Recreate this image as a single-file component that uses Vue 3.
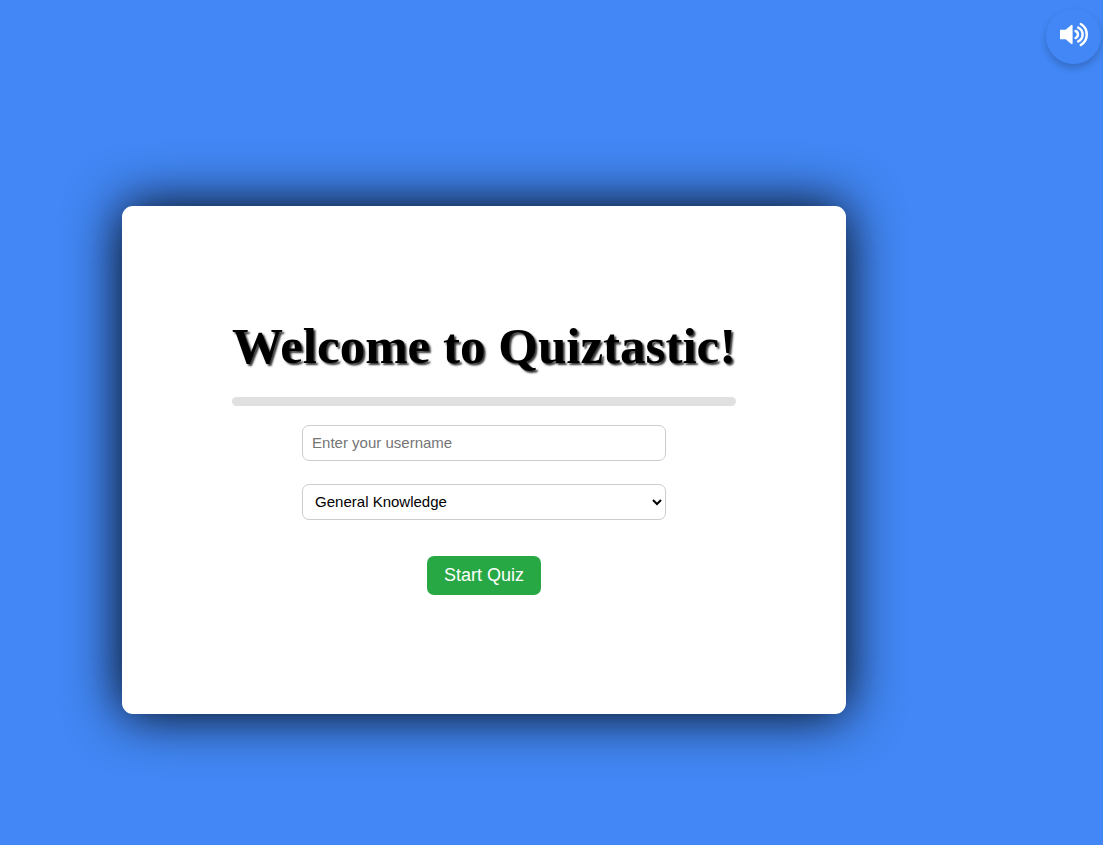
<script setup>
import { ref } from 'vue'

const username = ref('')
const category = ref('General Knowledge')
const categories = ['General Knowledge', 'Science', 'History', 'Sports']
</script>

<template>
  <div class="page">
    <button class="sound" type="button" aria-label="Toggle sound">
      <svg viewBox="0 0 30 27" width="30" height="27" aria-hidden="true">
        <path fill="currentColor" d="M1 8.7H6.6L12 4.2Q13.6 3.2 13.6 4.8V22.2Q13.6 23.8 12 22.8L6.6 18.3H1Z" />
        <g fill="none" stroke="currentColor" stroke-width="2.5" stroke-linecap="round">
          <path d="M16.6 10A3.8 3.8 0 0 1 16.6 17" />
          <path d="M19.2 6.6A7.6 7.6 0 0 1 19.2 20.4" />
          <path d="M21.8 3A12.2 12.2 0 0 1 21.8 24" />
        </g>
      </svg>
    </button>

    <main class="card">
      <div class="intro">
        <h1>Welcome to Quiztastic!</h1>
        <div class="progress"></div>
        <form @submit.prevent>
          <input
            v-model="username"
            class="field"
            type="text"
            placeholder="Enter your username"
            aria-label="Username"
          />
          <select v-model="category" class="field" aria-label="Category">
            <option v-for="c in categories" :key="c">{{ c }}</option>
          </select>
          <button class="start" type="submit">Start Quiz</button>
        </form>
      </div>
    </main>
  </div>
</template>

<style>
body {
  background: #4287f5;
}
</style>

<style scoped>
.page {
  box-sizing: border-box;
  display: flex;
  align-items: center;
  min-height: 100vh;
  padding: 75px 16px 0 122px;
  font-family: "Liberation Sans", Arial, sans-serif;
}

.sound {
  position: absolute;
  top: 9px;
  right: 2px;
  display: flex;
  align-items: center;
  justify-content: center;
  width: 55px;
  height: 55px;
  padding: 0 0 4px 1px;
  border: 0;
  border-radius: 50%;
  background: #4287f5;
  color: #fff;
  box-shadow: 0 4px 7px rgba(0, 0, 0, 0.2);
  cursor: pointer;
}

.card {
  padding: 110px;
  border-radius: 11px;
  background: #fff;
  box-shadow: 0 0 54px #000;
}

h1 {
  margin: 0 0 20px;
  font-family: "Liberation Serif", "Times New Roman", serif;
  font-size: 51px;
  line-height: 61px;
  font-weight: 700;
  color: #000;
  text-align: center;
  text-shadow: 2px 2px 2px rgba(0, 0, 0, 0.8);
}

.progress {
  height: 9px;
  border-radius: 5px;
  background: #e0e0e0;
}

form {
  display: flex;
  flex-direction: column;
  align-items: center;
  margin-top: 19px;
}

.field {
  box-sizing: border-box;
  width: 364px;
  max-width: 100%;
  height: 36px;
  margin: 0 0 23px;
  padding: 0 9px 2px;
  border: 1px solid #ccc;
  border-radius: 7px;
  background: #fff;
  color: #000;
  font: 15px "Liberation Sans", Arial, sans-serif;
}

select.field {
  padding: 0 8px 2px;
}

.start {
  height: 39px;
  margin: 13px 0 9px;
  padding: 0 17px;
  border: 0;
  border-radius: 7px;
  background: #28a745;
  color: #fff;
  font: 18px "Liberation Sans", Arial, sans-serif;
  cursor: pointer;
}
</style>
